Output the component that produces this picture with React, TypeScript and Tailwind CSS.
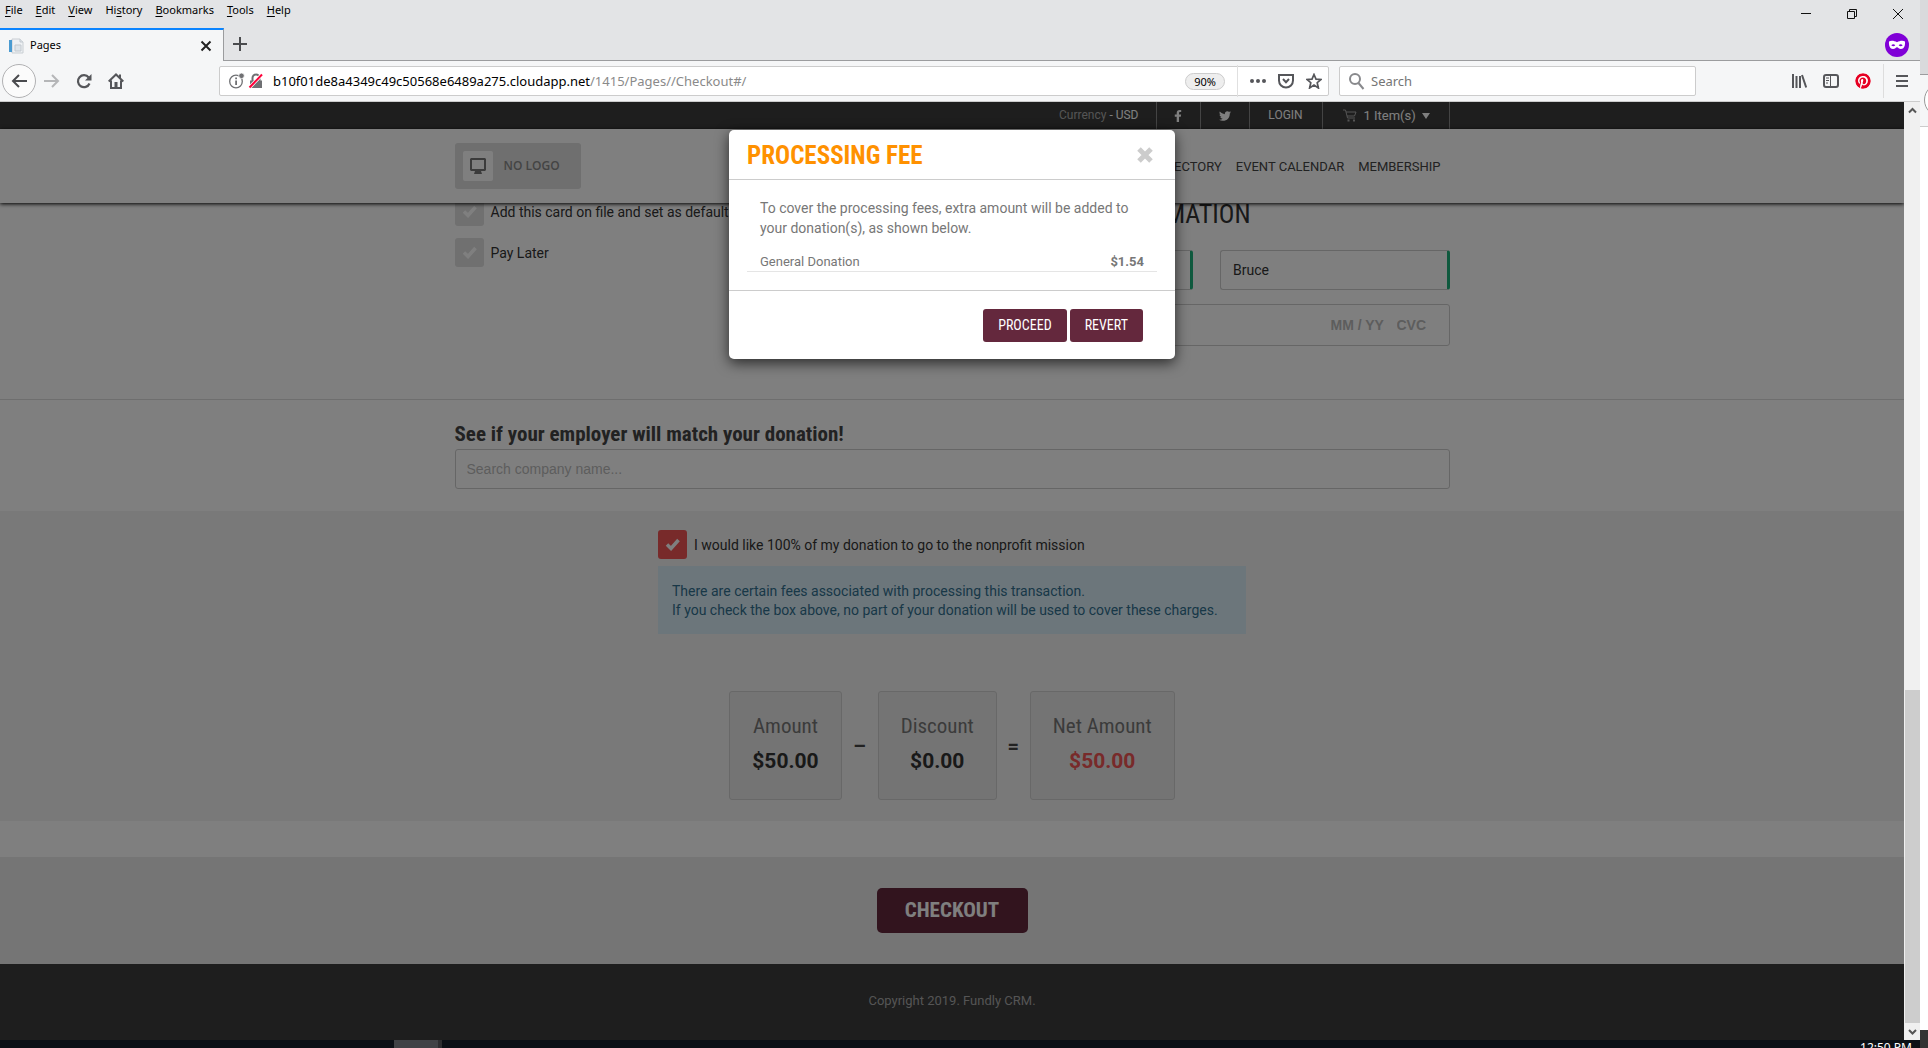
import { ReactNode } from "react";
import { FaFacebookF, FaPinterest, FaTwitter } from "react-icons/fa";

//Data

const menus = ["File", "Edit", "View", "History", "Bookmarks", "Tools", "Help"];
const accessKeys = [0, 0, 0, 2, 0, 0, 0];

//Small parts

const CheckBox = ({ id, label, checked }: { id: string; label: string; checked?: boolean }) => (
  <div className="flex items-center gap-[7px]">
    <span className="relative h-[29px] w-[29px] shrink-0">
      <input
        id={id}
        type="checkbox"
        defaultChecked={checked}
        className={`h-full w-full appearance-none rounded-[3px] ${checked ? "bg-[#f05454]" : "bg-[#e0e0e0]"}`}
      />
      <svg
        className="pointer-events-none absolute top-2 left-[7px]"
        width="15"
        height="13"
        viewBox="0 0 15 13"
        fill="none"
        stroke="#fff"
        strokeWidth="3.500"
      >
        <path d="M2 6.500l4 4L13.500 2" />
      </svg>
    </span>
    <label htmlFor={id} className="pt-px text-sm text-[#333]">
      {label}
    </label>
  </div>
);

const AmountCard = ({ title, value, accent }: { title: string; value: string; accent?: boolean }) => (
  <div className="flex h-[109px] flex-col items-center rounded-[3px] border border-[#d0d0d0] bg-[#e8e8e8] px-[22px] pt-[17px]">
    <div className="font-['Roboto_Condensed','Liberation_Sans_Narrow',sans-serif] text-[21px] leading-[35px] font-normal text-[#777]">
      {title}
    </div>
    <div className={`text-[21px] leading-[35px] font-bold ${accent ? "text-[#f05454]" : "text-[#333]"}`}>{value}</div>
  </div>
);

const IconButton = ({ label, children }: { label: string; children: ReactNode }) => (
  <button type="button" aria-label={label} className="flex h-8 w-6 items-center justify-center text-[#55565a]">
    {children}
  </button>
);

//Browser frame

const MenuBar = () => (
  <div className="flex h-7 justify-between bg-[#e3e4e6] text-[11px]">
    <nav className="flex items-start gap-[13px] pt-[2px] pl-[5px] leading-4">
      {menus.map((menu, i) => (
        <button type="button" key={menu}>
          {menu.slice(0, accessKeys[i])}
          <u className="underline-offset-2">{menu[accessKeys[i]]}</u>
          {menu.slice(accessKeys[i] + 1)}
        </button>
      ))}
    </nav>
    <div className="flex gap-[34px] pr-4">
      <button type="button" aria-label="Minimize">
        <svg width="12" height="12" viewBox="0 0 12 12" fill="none" stroke="#111">
          <path d="M1 5.500h10" />
        </svg>
      </button>
      <button type="button" aria-label="Restore">
        <svg width="12" height="12" viewBox="0 0 12 12" fill="none" stroke="#111">
          <path d="M1.500 3.500h7v7h-7zM3.500 3.500v-2h7v7h-2" />
        </svg>
      </button>
      <button type="button" aria-label="Close window">
        <svg width="12" height="12" viewBox="0 0 12 12" fill="none" stroke="#111">
          <path d="M1 1l10 10M11 1L1 11" />
        </svg>
      </button>
    </div>
  </div>
);

const TabStrip = () => (
  <div className="flex h-[33px] bg-[#e3e4e6]">
    <div className="flex w-[224px] items-center border-t-2 border-r border-t-[#0a84ff] border-r-[#9b9c9e] bg-[#f5f6f7] pr-[11px] pl-2 text-[11px]">
      <svg width="16" height="16" viewBox="0 0 16 16">
        <path d="M4 1h8l3 3v11H4z" fill="#eef1f4" stroke="#c9ced3" />
        <path d="M12 1v3h3M7 7h6v6H7z" fill="#dfe5ea" stroke="#c3c9cf" />
        <path d="M1 2h3v12H1z" fill="#4a9bd1" />
      </svg>
      <span className="flex-1 pl-[6px]">Pages</span>
      <button type="button" aria-label="Close tab">
        <svg width="12" height="12" viewBox="0 0 12 12" stroke="#222" strokeWidth="2">
          <path d="M1.500 1.500l9 9M10.500 1.500l-9 9" />
        </svg>
      </button>
    </div>
    <div className="flex flex-1 items-start justify-between border-b border-[#9b9c9e] pr-[11px] pl-[9px]">
      <button type="button" aria-label="New tab" className="pt-[9px]">
        <svg width="14" height="14" viewBox="0 0 14 14" stroke="#4a4b4e" strokeWidth="2">
          <path d="M7 0v14M0 7h14" />
        </svg>
      </button>
      <svg className="mt-[5px]" width="24" height="24" viewBox="0 0 24 24">
        <circle cx="12" cy="12" r="12" fill="#8000d7" />
        <path
          fill="#fff"
          fillRule="evenodd"
          d="M4 8.500C6.500 7.200 9.500 8 12 9.200 14.500 8 17.500 7.200 20 8.500c.4 4-1 7.500-4 7.500-2.200 0-2.700-1.800-4-1.800S10.200 16 8 16c-3 0-4.400-3.500-4-7.500zM6.300 12.300c1.200 1.200 2.900 1.200 4 0-1.100-1.300-2.800-1.300-4 0zm7.400 0c1.100 1.200 2.800 1.200 4 0-1.200-1.300-2.900-1.300-4 0z"
        />
      </svg>
    </div>
  </div>
);

const ToolBar = () => (
  <div className="flex h-[41px] items-center border-b border-[#ccc] bg-[#f5f6f7] pr-[6px] pl-[2px]">
    <div className="flex w-[217px] items-center">
      <button
        type="button"
        aria-label="Back"
        className="flex h-[34px] w-[34px] items-center justify-center rounded-full border border-[#b1b1b3] bg-[#fbfbfb]"
      >
        <svg width="16" height="14" viewBox="0 0 16 14" fill="none" stroke="#4a4b4e" strokeWidth="2">
          <path d="M8 1L2 7l6 6M2 7h14" />
        </svg>
      </button>
      <button type="button" aria-label="Forward" className="ml-2">
        <svg width="16" height="14" viewBox="0 0 16 14" fill="none" stroke="#b5b6b8" strokeWidth="2">
          <path d="M8 1l6 6-6 6M14 7H0" />
        </svg>
      </button>
      <button type="button" aria-label="Reload" className="ml-4">
        <svg width="16" height="16" viewBox="0 0 16 16" fill="none" stroke="#55565a" strokeWidth="2.200">
          <path d="M13.500 10.500A6 6 0 1 1 12.700 4.500" />
          <path d="M15.500 1v6.500H9z" fill="#55565a" stroke="none" />
        </svg>
      </button>
      <button type="button" aria-label="Home" className="ml-4">
        <svg width="16" height="16" viewBox="0 0 16 16" fill="none" stroke="#55565a" strokeWidth="2">
          <path d="M.7 8.500L8 1.500l7.300 7M3 7.500V15h10V7.500" />
          <path d="M6.500 9h3v6h-3zM11 1.500h2V5h-2z" fill="#55565a" stroke="none" />
        </svg>
      </button>
    </div>
    <div className="flex h-[30px] flex-1 items-center rounded-[2px] border border-[#ccc] bg-white pr-[2px] pl-[9px] text-[13px]">
      <svg width="34" height="16" viewBox="0 0 34 16">
        <circle cx="7" cy="8.500" r="6.300" fill="none" stroke="#6f7073" strokeWidth="1.300" />
        <circle cx="12.500" cy="2.800" r="2.800" fill="#6f7073" stroke="#fff" strokeWidth=".8" />
        <path d="M6.200 7.500h1.800V12H6.200zM6.200 4.500h1.800v1.800H6.200z" fill="#6f7073" />
        <path d="M21 7.500h12V15H21z" fill="#6f7073" />
        <path d="M23.500 8V5a3.500 3.500 0 0 1 7 0v3" fill="none" stroke="#6f7073" strokeWidth="2" />
        <path d="M20.500 14.500L33 1.500" stroke="#fff" strokeWidth="3.500" />
        <path d="M20.500 14.500L33 1.500" stroke="#ff0039" strokeWidth="2" />
      </svg>
      <span className="flex-1 pt-[2px] pl-[10px] text-black">
        b10f01de8a4349c49c50568e6489a275.cloudapp.net<span className="text-[#8a8a8a]">/1415/Pages//Checkout#/</span>
      </span>
      <button type="button" className="mr-3 rounded-full border border-[#ccc] bg-[#eee] px-2 text-[11px] leading-[15px]">
        90%
      </button>
      <div className="flex items-center gap-1 border-l border-[#e0e0e0] pl-2">
        <IconButton label="Page actions">
          <svg width="16" height="4" viewBox="0 0 16 4" fill="#55565a">
            <circle cx="2" cy="2" r="2" />
            <circle cx="8" cy="2" r="2" />
            <circle cx="14" cy="2" r="2" />
          </svg>
        </IconButton>
        <IconButton label="Pocket">
          <svg width="16" height="16" viewBox="0 0 16 16" fill="none" stroke="#55565a" strokeWidth="2">
            <path d="M1 2h14v5.500a7 7 0 0 1-14 0zM5 6l3 3.200L11 6" />
          </svg>
        </IconButton>
        <IconButton label="Bookmark">
          <svg width="16" height="16" viewBox="0 0 16 16" fill="none" stroke="#55565a" strokeWidth="1.700">
            <path d="M8 1.500l2 4.600 5 .4-3.800 3.200L12.400 15 8 12.100 3.600 15l1.200-5.300L1 6.500l5-.4z" />
          </svg>
        </IconButton>
      </div>
    </div>
    <div className="ml-[10px] flex h-[30px] w-[357px] items-center rounded-[2px] border border-[#ccc] bg-white pl-2">
      <svg width="17" height="17" viewBox="0 0 17 17" fill="none" stroke="#88898c" strokeWidth="2">
        <circle cx="7" cy="6" r="5" />
        <path d="M10.500 10l5 6" />
      </svg>
      <input
        type="text"
        aria-label="Search the web"
        placeholder="Search"
        className="ml-[6px] min-w-0 flex-1 pt-[2px] text-[13px] outline-none placeholder:text-[#757575]"
      />
    </div>
    <div className="ml-[91px] flex items-center gap-2">
      <IconButton label="Library">
        <svg width="16" height="14" viewBox="0 0 16 14" fill="none" stroke="#55565a" strokeWidth="2">
          <path d="M2 0v14M5.500 2v12M9 2v12M11 1l4.200 12.500" />
        </svg>
      </IconButton>
      <IconButton label="Sidebars">
        <svg width="16" height="14" viewBox="0 0 16 14" fill="none" stroke="#55565a">
          <rect x="1" y="1" width="14" height="12" rx="2" strokeWidth="2" />
          <path d="M7.500 1v12M3 4h3M3 6.500h3M3 9h2" />
        </svg>
      </IconButton>
      <IconButton label="Pinterest">
        <FaPinterest className="rounded-full bg-white text-[16px] text-[#e60023]" />
      </IconButton>
      <div className="flex h-[34px] items-center border-l border-[#ddd] pl-[6px]">
        <IconButton label="Open menu">
          <svg width="12" height="12" viewBox="0 0 12 12" stroke="#55565a" strokeWidth="2">
            <path d="M0 1h12M0 6h12M0 11h12" />
          </svg>
        </IconButton>
      </div>
    </div>
  </div>
);

const ScrollBar = () => (
  <div className="flex w-4 flex-col items-center bg-[#f0f0f0] pl-px">
    <svg className="mt-1" width="9" height="9" viewBox="0 0 9 9" fill="none" stroke="#555" strokeWidth="2">
      <path d="M1 6.500L4.500 3 8 6.500" />
    </svg>
    <div className="flex-[574]" />
    <div className="w-full flex-[333] bg-[#cdcdcd]" />
    <svg className="my-1" width="9" height="9" viewBox="0 0 9 9" fill="none" stroke="#555" strokeWidth="2">
      <path d="M1 3l3.500 3.500L8 3" />
    </svg>
  </div>
);

//Site

const TopBar = () => (
  <div className="h-[27px] bg-[#3c3c3c] text-[12px] text-white">
    <div className="mx-auto flex h-full max-w-[995px] justify-end leading-[27px]">
      <div className="pr-[17px]">
        <span className="text-[#aaa]">Currency</span> - USD
      </div>
      <a href="#facebook" aria-label="Facebook" className="flex w-11 items-center justify-center border-l border-[#888]">
        <FaFacebookF className="text-[12px]" />
      </a>
      <a href="#twitter" aria-label="Twitter" className="flex w-[49px] items-center justify-center border-l border-[#888]">
        <FaTwitter className="text-[12px]" />
      </a>
      <a href="#login" className="w-[73px] border-l border-[#888] text-center">
        LOGIN
      </a>
      <button type="button" className="flex w-[128px] items-center border-x border-[#888] pl-5 text-[13px]">
        <svg width="14" height="13" viewBox="0 0 14 13" fill="none" stroke="#aaa">
          <path d="M0 1h2.500l2 8h7.500M3 3h10l-1.500 4H4" />
          <path d="M4.500 10.500h2v2h-2zM10 10.500h2v2h-2z" fill="#aaa" stroke="none" />
        </svg>
        <span className="pl-[7px]">1 Item(s)</span>
        <svg className="ml-[6px]" width="8" height="6" viewBox="0 0 8 6" fill="#fff">
          <path d="M0 0h8L4 6z" />
        </svg>
      </button>
    </div>
  </div>
);

const SiteHeader = () => (
  <header className="relative z-10 h-[74px] bg-white shadow-[0_1px_4px_#000]">
    <div className="mx-auto flex h-full max-w-[995px] items-center justify-between">
      <div className="flex h-[46px] w-[126px] items-center rounded-[3px] bg-[#dedede] pl-2 font-['Open_Sans',sans-serif] text-[12px] font-semibold text-[#888]">
        <span className="mr-[11px] flex h-[30px] w-[30px] items-center justify-center rounded-[2px] bg-white">
          <svg width="16" height="16" viewBox="0 0 16 16">
            <path fill="#777" fillRule="evenodd" d="M1 0h14l1 1v11l-1 1h-4l1 3H4l1-3H1l-1-1V1zM2 2v9h12V2z" />
          </svg>
        </span>
        NO LOGO
      </div>
      <nav className="flex gap-[14px] pt-[2px] pr-[9px] text-[13px] text-[#444]">
        <a href="#directory">DIRECTORY</a>
        <a href="#events">EVENT CALENDAR</a>
        <a href="#membership">MEMBERSHIP</a>
      </nav>
    </div>
  </header>
);

const CardSection = () => (
  <section className="border-b border-[#dcdcdc] bg-white">
    <div className="mx-auto -mt-[6px] flex h-[202px] max-w-[995px] justify-between">
      <div className="flex flex-col gap-3">
        <CheckBox id="card-file" label="Add this card on file and set as default" />
        <CheckBox id="pay-later" label="Pay Later" />
      </div>
      <div className="w-[486px]">
        <h2 className="pr-[199px] text-right font-['Roboto_Condensed','Liberation_Sans_Narrow',sans-serif] text-[26px] leading-[34px] text-[#333]">
          CARD INFORMATION
        </h2>
        <div className="mt-[19px] flex gap-[27px]">
          <input
            aria-label="Last name"
            className="h-10 min-w-0 flex-1 rounded-[3px] border border-r-3 border-[#ccc] border-r-[#1fb37c] px-3"
          />
          <input
            aria-label="First name"
            defaultValue="Bruce"
            className="h-10 min-w-0 flex-1 rounded-[3px] border border-r-3 border-[#ccc] border-r-[#1fb37c] px-3 text-sm text-[#333]"
          />
        </div>
        <div className="mt-[14px] flex h-[42px] items-center justify-end gap-2 rounded-[3px] border border-[#ccc] pr-[22px] font-['Liberation_Sans',sans-serif] text-sm font-bold">
          <input aria-label="Expiry date" placeholder="MM / YY" className="w-[58px] placeholder:text-[#bbb]" />
          <input aria-label="Security code" placeholder="CVC" className="w-[30px] placeholder:text-[#bbb]" />
        </div>
      </div>
    </div>
  </section>
);

const EmployerSection = () => (
  <section className="bg-white pb-[22px]">
    <div className="mx-auto max-w-[995px] pt-[19px]">
      <label
        htmlFor="company"
        className="block font-['Roboto_Condensed','Liberation_Sans_Narrow',sans-serif] text-[21px] leading-[30px] font-bold text-[#444]"
      >
        See if your employer will match your donation!
      </label>
      <input
        id="company"
        type="text"
        placeholder="Search company name..."
        className="h-10 w-full rounded-[3px] border border-[#ccc] px-[11px] font-['Liberation_Sans',sans-serif] text-sm placeholder:text-[#bbb]"
      />
    </div>
  </section>
);

const SummarySection = () => (
  <section className="flex flex-col items-center bg-[#f2f2f2] pt-[19px] pb-[21px]">
    <div className="w-[588px]">
      <CheckBox id="mission" label="I would like 100% of my donation to go to the nonprofit mission" checked />
      <p className="mt-[7px] bg-[#d9edf7] px-[14px] pt-4 pb-[14px] text-sm leading-[19px] text-[#31708f]">
        There are certain fees associated with processing this transaction.
        <br />
        If you check the box above, no part of your donation will be used to cover these charges.
      </p>
    </div>
    <div className="mt-[57px] flex items-center text-[20px] font-bold text-[#444]">
      <AmountCard title="Amount" value="$50.00" />
      <span className="w-9 text-center">–</span>
      <AmountCard title="Discount" value="$0.00" />
      <span className="w-[33px] text-center">=</span>
      <AmountCard title="Net Amount" value="$50.00" accent />
    </div>
  </section>
);

const FeeDialog = () => (
  <div role="dialog" aria-labelledby="fee-title" className="w-[446px] rounded-[5px] bg-white text-[#777] shadow-[0_4px_14px_#000a]">
    <div className="flex h-[50px] items-center justify-between border-b border-[#ccc] px-[18px]">
      <h1
        id="fee-title"
        className="pt-[2px] font-['Roboto_Condensed','Liberation_Sans_Narrow',sans-serif] text-[25px] font-bold text-[#ff9100]"
      >
        PROCESSING FEE
      </h1>
      <button type="button" aria-label="Close dialog" className="mr-1">
        <svg width="16" height="16" viewBox="0 0 16 16" stroke="#ccc" strokeWidth="5">
          <path d="M2 2l12 12M14 2L2 14" />
        </svg>
      </button>
    </div>
    <div className="border-b border-[#ccc] px-[18px] pt-[18px] pb-[18px]">
      <p className="px-[13px] text-[14px] leading-5">
        To cover the processing fees, extra amount will be added to your donation(s), as shown below.
      </p>
      <div className="mt-[14px] flex justify-between border-b border-[#e5e5e5] px-[13px] text-[13px] leading-[19px]">
        <span>General Donation</span>
        <b>$1.54</b>
      </div>
    </div>
    <div className="flex justify-end gap-[3px] px-8 pt-[18px] pb-[17px] font-['Roboto_Condensed','Liberation_Sans_Narrow',sans-serif] text-[14px] text-white">
      <button type="button" className="h-[33px] rounded-[3px] bg-[#64283d] px-[15px]">
        PROCEED
      </button>
      <button type="button" className="h-[33px] rounded-[3px] bg-[#64283d] px-[15px]">
        REVERT
      </button>
    </div>
  </div>
);

//Component

const App = () => {
  return (
    <div className="flex min-h-screen overflow-hidden bg-white">
      <div className="flex min-w-0 flex-1 flex-col font-['Noto_Sans',sans-serif]">
        <MenuBar />
        <TabStrip />
        <ToolBar />
        <div className="flex flex-1">
          <main className="relative flex min-w-0 flex-1 flex-col overflow-hidden bg-white font-[Roboto,sans-serif]">
            <TopBar />
            <SiteHeader />
            <CardSection />
            <EmployerSection />
            <SummarySection />
            <section className="mt-9 flex justify-center bg-[#eaeaea] pt-[31px] pb-[31px]">
              <button
                type="button"
                className="h-[45px] w-[151px] rounded-[5px] bg-[#64283d] font-['Roboto_Condensed','Liberation_Sans_Narrow',sans-serif] text-[21px] font-bold text-white"
              >
                CHECKOUT
              </button>
            </section>
            <footer className="flex-1 bg-[#3c3c3c] pt-[27px] text-center text-[13px] leading-5 text-[#aaa]">
              Copyright 2019. Fundly CRM.
            </footer>

            {/* Backdrop and dialog */}
            <div className="absolute inset-0 z-20 flex items-start justify-center bg-black/50 pt-7">
              <FeeDialog />
            </div>
          </main>
          <ScrollBar />
        </div>

        {/* Taskbar */}
        <div className="flex h-2 justify-between overflow-hidden bg-[#0b1016] pr-2 pl-[394px]">
          <div className="w-12 border-r-4 border-[#2c2d30] bg-[#404246]" />
          <span className="text-[12px] leading-4 text-white">12:50 PM</span>
        </div>
      </div>

      {/* Edge of the window behind */}
      <div className="flex w-2 flex-col overflow-hidden">
        <div className="h-[75px] border-b border-[#9b9c9e] bg-[#d9dadc]" />
        <div className="h-[52px] border-b border-[#ccc] bg-[#f5f6f7] pt-2 pl-1">
          <div className="h-[34px] w-[34px] rounded-full border border-[#999] bg-white" />
        </div>
        <div className="flex-1 bg-white" />
        <div className="h-[18px] bg-[#333]" />
      </div>
    </div>
  );
};

export default App;
